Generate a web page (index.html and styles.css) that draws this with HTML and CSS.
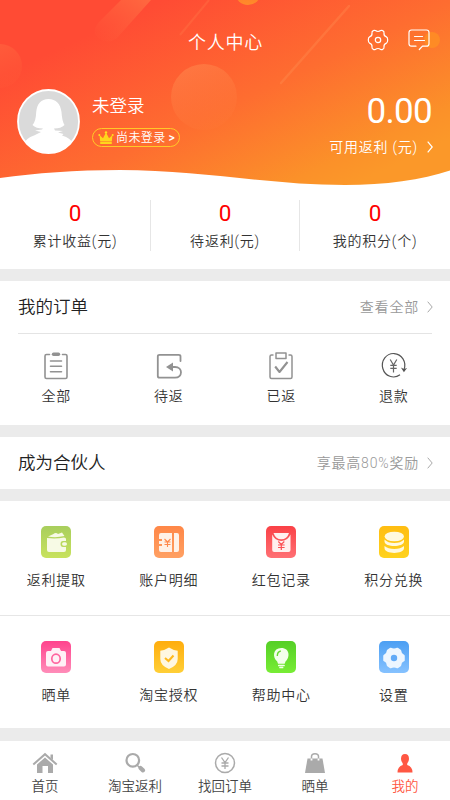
FILE: index.html
```html
<!DOCTYPE html>
<html lang="zh-CN">
<head>
<meta charset="utf-8">
<meta name="viewport" content="width=device-width, initial-scale=1">
<title>个人中心</title>
<link rel="stylesheet" href="styles.css">
</head>
<body>
<div class="app">
  <header class="hero">
    <svg class="hero-bg" viewBox="0 0 450 190" aria-hidden="true">
      <defs>
        <linearGradient id="hero" gradientUnits="userSpaceOnUse" x1="130" y1="15" x2="235" y2="240"><stop offset="0" stop-color="#ff4b34"/><stop offset=".5" stop-color="#fe6d30"/><stop offset=".88" stop-color="#fb9129"/><stop offset="1" stop-color="#fb9829"/></linearGradient>
        <linearGradient id="beam" x1="1" y1="0" x2="0" y2="1"><stop offset="0" stop-color="#ff7545" stop-opacity=".7"/><stop offset="1" stop-color="#ff6640" stop-opacity="0"/></linearGradient>
        <linearGradient id="orb" x1=".2" y1="0" x2=".6" y2="1"><stop offset="0" stop-color="#ff8c50" stop-opacity=".55"/><stop offset="1" stop-color="#ff8040" stop-opacity=".1"/></linearGradient>
        <linearGradient id="ball" x1="0" y1="0" x2="0" y2="1"><stop offset="0" stop-color="#ff6a2e"/><stop offset="1" stop-color="#ff8b2a"/></linearGradient>
      </defs>
      <path fill="url(#hero)" d="M0 0H450V170.500C422 180 385 185 345 185C270 185 200 170 120 170C75 170 36 173 0 178Z"/>
      <path fill="url(#beam)" d="M121 0H151L117 38Q108 45 98 38Q91 31 99 22Z"/>
      <path fill="none" stroke="#ff8850" stroke-opacity=".25" stroke-width="2" d="M209 0L180 35"/>
      <path fill="none" stroke="#ffa060" stroke-opacity=".25" stroke-width="2.500" stroke-linecap="round" d="M349 6L281 83"/>
      <circle cx="204" cy="97" r="33" fill="url(#orb)"/>
      <circle cx="0" cy="66" r="22" fill="url(#orb)" opacity=".5"/>
      <circle cx="248" cy="-8" r="13" fill="url(#ball)"/>
      <circle cx="432" cy="40" r="8" fill="#ff9820" opacity=".6"/>
    </svg>
    <div class="topbar">
      <h1 class="page-title">个人中心</h1>
      <div class="actions">
        <svg width="22" height="24" viewBox="0 0 22 24" fill="none" stroke="#fff" stroke-width="1.200" stroke-linejoin="round"><path d="M8.300 2.600Q11 4.400 13.700 2.600Q14.700 2 15.600 2.600Q17.400 3.500 17 5Q16.600 8 19.400 8.900Q20.700 9.500 20.700 12T19.400 15.100Q16.600 16 17 19Q17.400 20.500 15.600 21.400Q14.700 22 13.700 21.400Q11 19.600 8.300 21.400Q7.300 22 6.400 21.400Q4.600 20.500 5 19Q5.400 16 2.600 15.100Q1.300 14.500 1.300 12T2.600 8.900Q5.400 8 5 5Q4.600 3.500 6.400 2.600Q7.300 2 8.300 2.600Z"/><circle cx="11" cy="12" r="2.700"/></svg>
        <svg width="22" height="22" viewBox="0 0 22 22" fill="none" stroke="#fff" stroke-width="1.200" stroke-linecap="round" stroke-linejoin="round"><path d="M8 17.200H3.500Q1 17.200 1 14.700V3.500Q1 1 3.500 1H18.500Q21 1 21 3.500V14.700Q21 17.200 18.500 17.200H14.500L11.300 20.500M6.500 7.500H14.500M6.500 11.500H16.500"/></svg>
      </div>
    </div>
    <div class="profile">
      <svg class="avatar" width="63" height="65" viewBox="0 0 63 65"><defs><clipPath id="face"><ellipse cx="31.500" cy="32.500" rx="30.500" ry="31.500"/></clipPath></defs><ellipse cx="31.500" cy="32.500" rx="30.500" ry="31.500" fill="#dadada"/><g clip-path="url(#face)"><path fill="#fff" d="M31.500 10C39 10 43.500 15 44.500 23Q45 32 47.500 36Q44 39.500 37 39.500L38 41.500L46 42L41 43.500L46.500 45L45 46.500Q54 49 57 56V65H6V56Q9 49 17 46.500L24 43L18 41.500L25 40.500L26 39.500Q19 39.500 15.500 36Q19 32 19.200 23C20 15 24 10 31.500 10Z"/></g><ellipse cx="31.500" cy="32.500" rx="30.500" ry="31.500" fill="none" stroke="#fff" stroke-width="1.800"/></svg>
      <div class="identity">
        <div class="name">未登录</div>
        <div class="badge"><svg width="16" height="14" viewBox="0 0 16 14"><path fill="#ffd51c" d="M1.500 4L5 7.200L8 1.500L11 7.200L14.500 4L13.800 10.500H2.200ZM2.200 11H13.800V13H2.200Z"/><g fill="#ffe11c"><circle cx="1.300" cy="4" r="1"/><circle cx="8" cy="1.400" r="1.200"/><circle cx="14.700" cy="4" r="1"/></g></svg><span>尚未登录</span><b>&gt;</b></div>
      </div>
      <div class="balance">
        <div class="amount">0.00</div>
        <div class="amount-label">可用返利 (元)<svg width="6" height="12" viewBox="0 0 6 12" fill="none" stroke="#fff" stroke-width="1.200"><path d="M.7.700L5.200 6L.7 11.300"/></svg></div>
      </div>
    </div>
  </header>

  <section class="stats">
    <div class="stat"><strong>0</strong><span>累计收益(元)</span></div>
    <div class="stat"><strong>0</strong><span>待返利(元)</span></div>
    <div class="stat"><strong>0</strong><span>我的积分(个)</span></div>
  </section>

  <section class="orders">
    <div class="row-head ruled"><h2>我的订单</h2><a class="more">查看全部<svg width="6" height="12" viewBox="0 0 6 12" fill="none" stroke="#a8a8a8"><path d="M.7.700L5.200 6L.7 11.300"/></svg></a></div>
    <div class="order-grid">
      <div class="cell"><svg width="28" height="28" viewBox="0 0 28 28" fill="none" stroke="#929292" stroke-width="1.600" stroke-linecap="round"><path d="M7.500 2.500H4.500Q3 2.500 3 4V25Q3 26.500 4.500 26.500H23.500Q25 26.500 25 25V4Q25 2.500 23.500 2.500H20.500M8.500 9H19.500M8.500 14.300H19.500M8.500 19.700H19.500"/><path stroke-width="3.400" d="M11.500 2.200H16.500"/></svg><span>全部</span></div>
      <div class="cell"><svg width="28" height="28" viewBox="0 0 28 28" fill="none" stroke="#929292" stroke-width="1.800" stroke-linecap="round"><path d="M25.500 9V4.500Q25.500 2.800 23.800 2.800H4.500Q2.800 2.800 2.800 4.500V24Q2.800 25.700 4.500 25.700H20C28 25.700 28 15 20 15H15"/><path fill="#929292" stroke="none" d="M11 15L18 10.500V19.500Z"/></svg><span>待返</span></div>
      <div class="cell"><svg width="28" height="28" viewBox="0 0 28 28" fill="none" stroke="#929292" stroke-width="1.500" stroke-linejoin="round"><path d="M6.500 3H4.500Q3 3 3 4.500V25Q3 26.500 4.500 26.500H23.500Q25 26.500 25 25V4.500Q25 3 23.500 3H21.500"/><path d="M9 1H19V6.500H9Z"/><path stroke-width="2.100" d="M8.200 14.500L12.500 20L20.500 10"/></svg><span>已返</span></div>
      <div class="cell"><svg width="28" height="28" viewBox="0 0 28 28" fill="none" stroke="#555" stroke-width="1.200"><path d="M20 22.800A11.200 11.700 0 1 1 24 17.500"/><path fill="#555" stroke="none" d="M20.900 15.500L24 17L27.100 16L23.900 20.300Z"/><path d="M10.200 7.500L13.500 13L16.800 7.500M13.500 13V20.500M10.300 13.300H16.700M10.300 16.400H16.700" stroke="#666"/></svg><span>退款</span></div>
    </div>
  </section>

  <section class="partner row-head"><h2>成为合伙人</h2><a class="more">享最高80%奖励<svg width="6" height="12" viewBox="0 0 6 12" fill="none" stroke="#a8a8a8"><path d="M.7.700L5.200 6L.7 11.300"/></svg></a></section>

  <section class="services">
    <div class="service"><i class="tile lime"><svg viewBox="0 0 30 32"><path fill="#f7fae5" d="M6 12Q15 13 23 11.500Q25 11.500 25 13V15H22Q19.500 15 19.500 18Q19.500 21 22 21H25V24Q25 26 23 26H8Q6 26 6 24Z"/><path fill="#f7fae5" d="M7 10.500L12 8.300Q15 6 17 8L21 6.500L23.500 10Q15 12 7 10.500Z"/><rect x="21" y="16.200" width="5" height="3.600" rx="1.800" fill="#f7fae5"/></svg></i><span>返利提取</span></div>
    <div class="service"><i class="tile orange"><svg viewBox="0 0 30 32"><path fill="#fff1e7" d="M5 9Q5 7 7 7H18V26H7Q5 26 5 24V20H8V18H5V15H8V13H5ZM20 7H23Q25 7 25 9V24Q25 26 23 26H20Z"/><path d="M10.500 13L13.500 16L16.500 13M13.500 16V21M10.500 16H16.500M10.500 18.500H16.500" fill="none" stroke="#ff8a4d" stroke-width="1.100"/></svg></i><span>账户明细</span></div>
    <div class="service"><i class="tile red"><svg viewBox="0 0 30 32"><path fill="#fff0ef" d="M6.200 8.500Q9 15 15.300 15T24.500 8.500V24Q24.500 26 22.500 26H8.200Q6.200 26 6.200 24Z"/><path fill="#fff0ef" d="M7.500 7H23Q21 13.300 15.300 13.300T7.500 7Z"/><path d="M12.300 15.500L15.300 18.500L18.300 15.500M15.300 18.500V24M12 19H18.600M12 21.500H18.600" fill="none" stroke="#fb5054" stroke-width="1.200"/></svg></i><span>红包记录</span></div>
    <div class="service"><i class="tile yellow"><svg viewBox="0 0 30 32"><g fill="#fff9df"><ellipse cx="15.300" cy="10.500" rx="9.700" ry="4.800"/><path d="M5.500 13.500Q9 17 15.300 17T25 13.500V15.500C25 21.500 5.500 21.500 5.500 15.500ZM5.500 20Q9 23 15.300 23T25 20V22C25 28.500 5.500 28.500 5.500 22Z"/></g></svg></i><span>积分兑换</span></div>
    <div class="service"><i class="tile pink"><svg viewBox="0 0 30 32"><path fill="#fff0f6" d="M7 10H10L11.500 7H18.500L20 10H23Q25 10 25 12V23.500Q25 25.500 23 25.500H7Q5 25.500 5 23.500V12Q5 10 7 10Z"/><ellipse cx="15" cy="17.700" rx="4.200" ry="4.500" fill="none" stroke="#ff659f" stroke-width="1.700"/></svg></i><span>晒单</span></div>
    <div class="service"><i class="tile amber"><svg viewBox="0 0 30 32"><path fill="#fff7e1" d="M15 6.500Q19 9.200 23.700 9.700V18Q23.700 24.500 15 28Q6.300 24.500 6.300 18V9.700Q11 9.200 15 6.500Z"/><path d="M11 17L14.500 20L19.500 14.500" fill="none" stroke="#ffb91e" stroke-width="2"/></svg></i><span>淘宝授权</span></div>
    <div class="service"><i class="tile green"><svg viewBox="0 0 30 32"><path fill="#f3ffec" d="M15.300 7C24 7 24.200 16.500 19.500 20.500L18.700 22.700H12L11.200 20.500C6.300 16.500 6.700 7 15.300 7Z"/><path d="M12.800 24.500H18M14 26.500H16.600" stroke="#f3ffec" stroke-width="1.700" stroke-linecap="round"/><path d="M11.300 15Q11.300 10.700 14.800 10" fill="none" stroke="#66db30" stroke-width="1.400"/></svg></i><span>帮助中心</span></div>
    <div class="service"><i class="tile blue"><svg viewBox="0 0 30 32"><path fill="#edf6ff" stroke="#edf6ff" stroke-width="2.500" stroke-linejoin="round" d="M11.500 8Q15 9.500 18.500 8L21 9.700Q21 13.200 24.500 14.800V19.200Q21 20.800 21 24.300L18.500 26Q15 24.500 11.500 26L9 24.300Q9 20.800 5.500 19.200V14.800Q9 13.200 9 9.700Z"/><circle cx="15" cy="17" r="3.200" fill="#61aaf7"/></svg></i><span>设置</span></div>
  </section>

  <nav class="tabs">
    <a class="tab"><svg width="26" height="22" viewBox="0 0 26 22"><path d="M1.300 12.500L13 2.200L24.700 12.500" fill="none" stroke="#aaa" stroke-width="2"/><path fill="#aaa" d="M13 5.500L21 12.500V21H16V14H10.500V21H5V12.500ZM18.500 2.500H21V8L18.500 6Z"/></svg><span>首页</span></a>
    <a class="tab"><svg width="24" height="22" viewBox="0 0 24 22" fill="none" stroke="#aaa"><circle cx="9.800" cy="8.300" r="6.300" stroke-width="2.200"/><path stroke-width="1.500" d="M14 13L17 16"/><path stroke-width="4.300" stroke-linecap="round" d="M17.500 16L20 18.300"/></svg><span>淘宝返利</span></a>
    <a class="tab"><svg width="22" height="22" viewBox="0 0 22 22" fill="none" stroke="#aaa" stroke-width="1.500"><circle cx="11" cy="11" r="9.500"/><path d="M7.500 5.500L11 10.500L14.500 5.500M11 10.500V17M7.500 11H14.500M7.500 14H14.500" stroke-width="1.300"/></svg><span>找回订单</span></a>
    <a class="tab"><svg width="22" height="22" viewBox="0 0 22 22"><path fill="#aaa" d="M3.500 6.500H18.500L21 21H1Z"/><path d="M7.500 8V4.500Q7.500 1.700 11 1.700T14.500 4.500V8" fill="none" stroke="#aaa" stroke-width="1.500"/><path d="M7.500 6.500V8.500M14.500 6.500V8.500" stroke="#fff" stroke-width="1.800"/></svg><span>晒单</span></a>
    <a class="tab active"><svg width="20" height="22" viewBox="0 0 20 22"><path fill="#ff5743" d="M10 2Q14 2 14 7Q14 9.500 12.200 11.500V13Q17.500 14.500 17.500 20.500H2.500Q2.500 14.500 7.800 13V11.500Q6 9.500 6 7Q6 2 10 2Z"/></svg><span>我的</span></a>
  </nav>
</div>
</body>
</html>
```
FILE: styles.css
```css
* { box-sizing: border-box; }
body {
  margin: 0;
  background: #fff;
  color: #333;
  font-family: Roboto, "Noto Sans CJK SC", sans-serif;
  font-size: 14px;
  font-weight: 350;
}
h1, h2 { margin: 0; font-weight: 350; }
svg { display: block; flex: none; }
.app { width: 450px; height: 800px; display: flex; flex-direction: column; overflow: hidden; }

.hero { position: relative; height: 190px; flex: none; color: #fff; }
.hero-bg { position: absolute; inset: 0; width: 450px; height: 190px; }
.topbar { position: relative; display: grid; grid-template-columns: 1fr auto 1fr; align-items: center; height: 82px; padding-right: 20px; padding-left: 20px; }
.page-title { grid-column: 2; padding: 3px 0 0 1px; font-size: 18px; letter-spacing: .7px; line-height: 26px; }
.actions { display: flex; justify-content: flex-end; align-items: center; gap: 19px; height: 24px; margin-top: -3px; }
.profile { position: relative; display: flex; height: 90px; padding: 8px 17px 0; }
.avatar { margin-top: -1px; }
.identity { margin-left: 12px; padding-top: 3px; }
.name { font-size: 17.500px; line-height: 26px; }
.badge { display: flex; align-items: center; width: 88px; height: 19px; margin-top: 9px; padding-left: 5px; border: 1px solid #ffc928; border-radius: 10px; font-size: 12px; letter-spacing: .4px; line-height: 17px; white-space: nowrap; }
.badge span { margin-left: 2px; padding-top: 2px; }
.badge b { margin-left: 3px; padding-top: 1px; font-size: 12px; font-weight: 500; }
.balance { margin-left: auto; display: flex; flex-direction: column; align-items: flex-end; }
.amount { height: 40px; margin-right: 1px; font-size: 35px; font-weight: 400; letter-spacing: -.7px; line-height: 44px; }
.amount-label { display: flex; align-items: center; gap: 9px; margin-top: 7px; font-size: 14px; letter-spacing: .8px; line-height: 20px; white-space: nowrap; }

.stats { display: grid; grid-template-columns: 150px 149px 151px; height: 91px; flex: none; padding-top: 10px; border-bottom: 12px solid #ebebeb; }
.stat { height: 51px; text-align: center; border-left: 1px solid #e6e6e6; }
.stat:first-child { border-left: 0; }
.stat strong { display: block; height: 27px; color: #f00; font-size: 22.500px; font-weight: 400; line-height: 26px; }
.stat span { display: block; font-size: 14px; letter-spacing: .8px; line-height: 28px; }

.row-head { display: flex; align-items: center; justify-content: space-between; height: 52px; padding: 0 17px 0 18px; }
.row-head h2 { color: #222; font-size: 17.500px; line-height: 26px; }
.more { display: flex; align-items: center; gap: 8px; color: #999; letter-spacing: .8px; line-height: 20px; }
.orders { height: 156px; flex: none; border-bottom: 12px solid #ebebeb; }
.ruled { position: relative; height: 53px; margin: 0 18px; padding: 0; border-bottom: 1px solid #e4e4e4; }
.ruled .more { margin-right: -1px; }
.order-grid { display: grid; grid-template-columns: repeat(4, 1fr); padding-top: 18px; }
.cell, .service { display: flex; flex-direction: column; align-items: center; letter-spacing: .8px; }
.cell span { margin-top: 6px; line-height: 20px; }
.partner { height: 64px; flex: none; border-bottom: 12px solid #ebebeb; }

.services { display: grid; grid-template-columns: repeat(4, 1fr); grid-template-rows: 115px 112px; height: 240px; flex: none; border-bottom: 13px solid #ebebeb; }
.service { padding-top: 25px; }
.service:nth-child(-n+4) { border-bottom: 1px solid #e6e6e6; }
.service span { margin-top: 12px; line-height: 20px; }
.tile { display: block; width: 30px; height: 32px; border-radius: 5px; }
.tile svg { width: 30px; height: 32px; }
.lime { background: linear-gradient(#a8ce5d, #c8e25d); }
.orange { background: linear-gradient(#ff8747, #ffa063); }
.red { background: linear-gradient(#fa4146, #ff7074); }
.yellow { background: linear-gradient(#ffbd12, #ffd21d); }
.pink { background: linear-gradient(#ff438d, #ff8db9); }
.amber { background: linear-gradient(#ffad0d, #ffcf37); }
.green { background: linear-gradient(#55cf27, #78ed35); }
.blue { background: linear-gradient(#4c9ff3, #86c2ff); }

.tabs { display: grid; grid-template-columns: repeat(5, 1fr); flex: 1; padding-top: 11px; }
.tab { display: flex; flex-direction: column; align-items: center; color: #444; font-size: 13.500px; }
.tab span { margin-top: 2px; line-height: 20px; white-space: nowrap; }
.active { color: #ff5743; }
```
